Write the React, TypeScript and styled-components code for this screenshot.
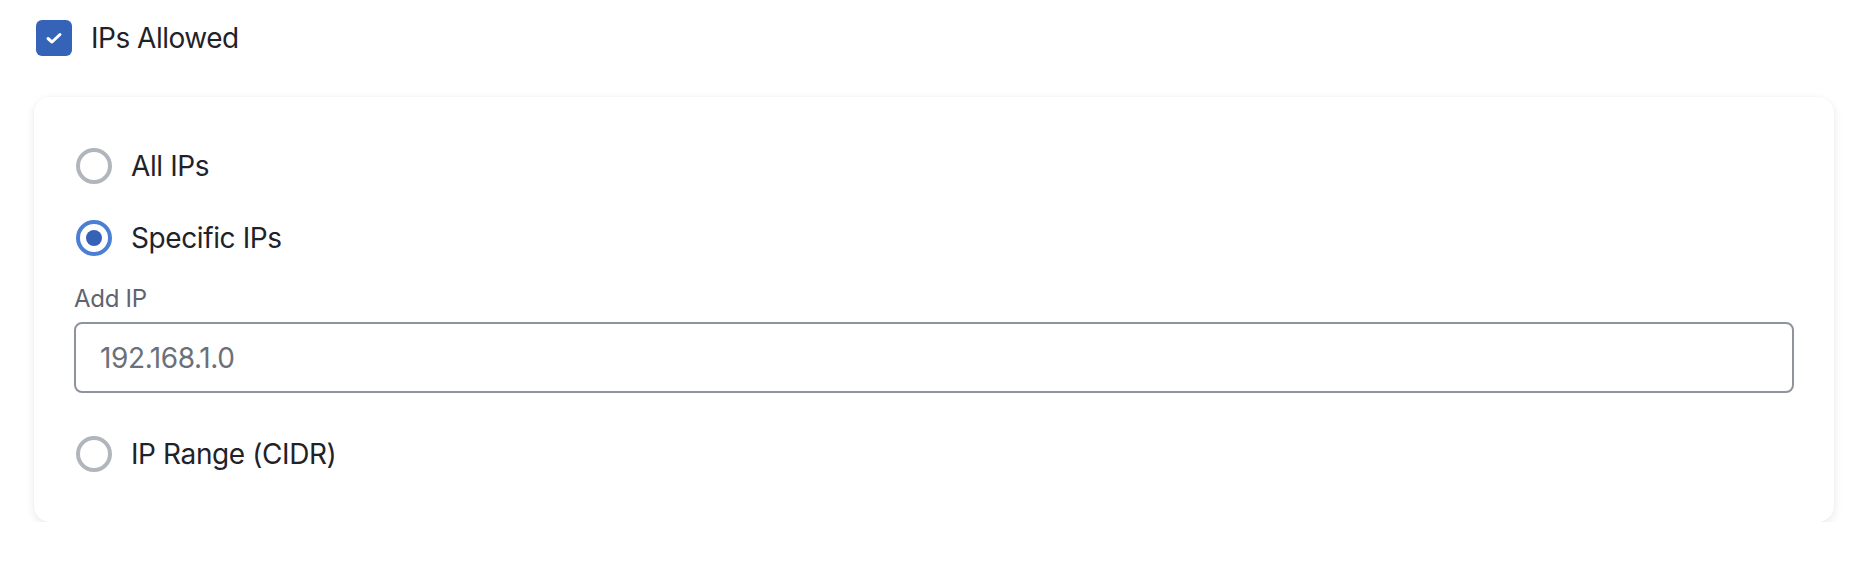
import * as React from 'react'
import styled, { createGlobalStyle } from 'styled-components'

const GlobalStyle = createGlobalStyle`
  html, body {
    margin: 0;
    background: #ffffff;
  }
  body {
    font-family: Inter, "Noto Sans", "Liberation Sans", sans-serif;
    color: #1f2329;
  }
`

const Page = styled.div`
  padding: 20px 32px 0 34px;
`

const CheckRow = styled.label`
  display: flex;
  align-items: center;
  gap: 19px;
  margin-left: 2px;
  height: 36px;
  font-size: 28px;
  letter-spacing: -0.5px;
  cursor: pointer;
`

const CheckBox = styled.span<{ $checked: boolean }>`
  display: flex;
  align-items: center;
  justify-content: center;
  width: 36px;
  height: 36px;
  box-sizing: border-box;
  border-radius: 6px;
  background: ${p => (p.$checked ? '#3563b8' : '#ffffff')};
  border: ${p => (p.$checked ? 'none' : '3px solid #b1b5bc')};
`

const Card = styled.section`
  margin-top: 41px;
  display: flex;
  flex-direction: column;
  padding: 51px 40px 50px 40px;
  background: #ffffff;
  border-radius: 16px;
  box-shadow: 0 3px 10px rgba(0, 0, 0, 0.09), 0 0 2px rgba(0, 0, 0, 0.03);
`

const RadioRow = styled.label<{ $gap?: number }>`
  display: flex;
  align-items: center;
  gap: 19px;
  height: 36px;
  margin-left: 2px;
  margin-top: ${p => p.$gap ?? 0}px;
  font-size: 28px;
  letter-spacing: -0.4px;
  cursor: pointer;
`

const RadioDot = styled.span<{ $checked: boolean }>`
  display: flex;
  align-items: center;
  justify-content: center;
  width: 36px;
  height: 36px;
  box-sizing: border-box;
  border-radius: 50%;
  border: 4px solid ${p => (p.$checked ? '#4a7fd5' : '#b1b5bc')};

  &::after {
    content: '';
    display: ${p => (p.$checked ? 'block' : 'none')};
    width: 16px;
    height: 16px;
    border-radius: 50%;
    background: #3562b7;
  }
`

const Field = styled.div`
  display: flex;
  flex-direction: column;
  margin-top: 29px;
`

const FieldLabel = styled.span`
  font-size: 24px;
  line-height: 28px;
  letter-spacing: -0.3px;
  color: #5f6470;
`

const TextInput = styled.input`
  margin-top: 9px;
  height: 71px;
  box-sizing: border-box;
  padding: 0 24px;
  border: 2px solid #8f949c;
  border-radius: 8px;
  font-family: inherit;
  font-size: 28px;
  letter-spacing: -0.4px;
  color: #6b7079;
  background: #ffffff;
  outline: none;
`

const Check = () => (
  <svg width="18" height="18" viewBox="0 0 18 18" fill="none">
    <polyline
      points="3,9.5 7,13 15,5.5"
      stroke="#ffffff"
      strokeWidth="3"
      strokeLinecap="round"
      strokeLinejoin="round"
    />
  </svg>
)

type Mode = 'all' | 'specific' | 'range'

export default function App() {
  const [allowed, setAllowed] = React.useState(true)
  const [mode, setMode] = React.useState<Mode>('specific')
  const [ip, setIp] = React.useState('192.168.1.0')

  return (
    <Page>
      <GlobalStyle />
      <CheckRow onClick={() => setAllowed(!allowed)}>
        <CheckBox $checked={allowed}>{allowed && <Check />}</CheckBox>
        IPs Allowed
      </CheckRow>

      <Card>
        <RadioRow onClick={() => setMode('all')}>
          <RadioDot $checked={mode === 'all'} />
          All IPs
        </RadioRow>
        <RadioRow $gap={36} onClick={() => setMode('specific')}>
          <RadioDot $checked={mode === 'specific'} />
          Specific IPs
        </RadioRow>
        <Field>
          <FieldLabel>Add IP</FieldLabel>
          <TextInput value={ip} onChange={e => setIp(e.target.value)} />
        </Field>
        <RadioRow $gap={43} onClick={() => setMode('range')}>
          <RadioDot $checked={mode === 'range'} />
          IP Range (CIDR)
        </RadioRow>
      </Card>
    </Page>
  )
}
